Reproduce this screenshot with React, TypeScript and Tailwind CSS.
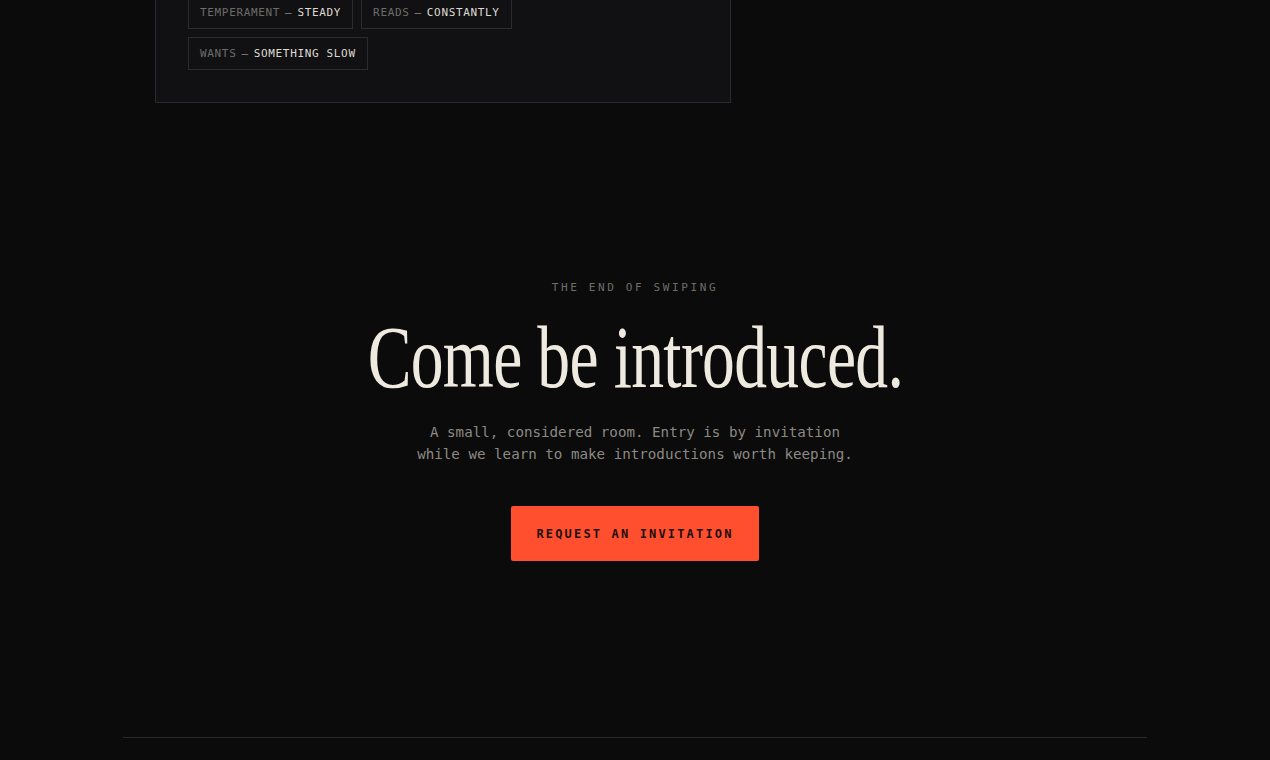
const mono = { fontFamily: '"DejaVu Sans Mono", "Liberation Mono", monospace' };

const tags = [
  { k: 'Temperament', v: 'Steady' },
  { k: 'Reads', v: 'Constantly' },
  { k: 'Wants', v: 'Something slow' },
];

function Tag({ k, v }: { k: string; v: string }) {
  return (
    <span className="inline-flex h-[33px] items-center border border-[#2c2c30] px-[11px] pt-[2px] text-[11px] uppercase tracking-[0.06em]">
      <span className="text-[#6e6c69]">{k}</span>
      <span className="mx-[5px] text-[#8d8a85]">—</span>
      <span className="text-[#dedad2]">{v}</span>
    </span>
  );
}

export default function App() {
  return (
    <div className="min-h-screen overflow-hidden bg-[#0b0b0b]" style={mono}>
      <div className="mx-auto w-[1024px]">
        <section className="px-8">
          <div className="-mt-[37px] w-[576px] border border-[#2a2a2e] bg-[#111114] p-8">
            <div className="flex w-[360px] flex-wrap gap-2">
              {tags.map((t) => (
                <Tag key={t.k} k={t.k} v={t.v} />
              ))}
            </div>
          </div>
        </section>

        <section className="flex flex-col items-center pt-[177px] pb-[176px] text-center">
          <p className="text-[11px] leading-4 uppercase tracking-[0.24em] text-[#6f6d69]">
            The end of swiping
          </p>
          <h1
            className="mt-[18px] scale-x-[0.745] text-[88px] leading-none tracking-[-0.01em] whitespace-nowrap text-[#efeae0]"
            style={{ fontFamily: '"Liberation Serif", "DejaVu Serif", serif' }}
          >
            Come be introduced.
          </h1>
          <p className="mt-[19px] text-[14.2px] leading-[22px] text-[#8c8984]">
            A small, considered room. Entry is by invitation
            <br />
            while we learn to make introductions worth keeping.
          </p>
          <button className="mt-[41px] h-[55px] w-[248px] rounded-[2px] bg-[#ff4f2e] text-[12px] font-bold uppercase tracking-[0.18em] text-[#1c0f0b]">
            Request an invitation
          </button>
        </section>

        <div className="border-t border-[#2a2a2a]" />
        <div className="h-[60px]" />
      </div>
    </div>
  );
}
